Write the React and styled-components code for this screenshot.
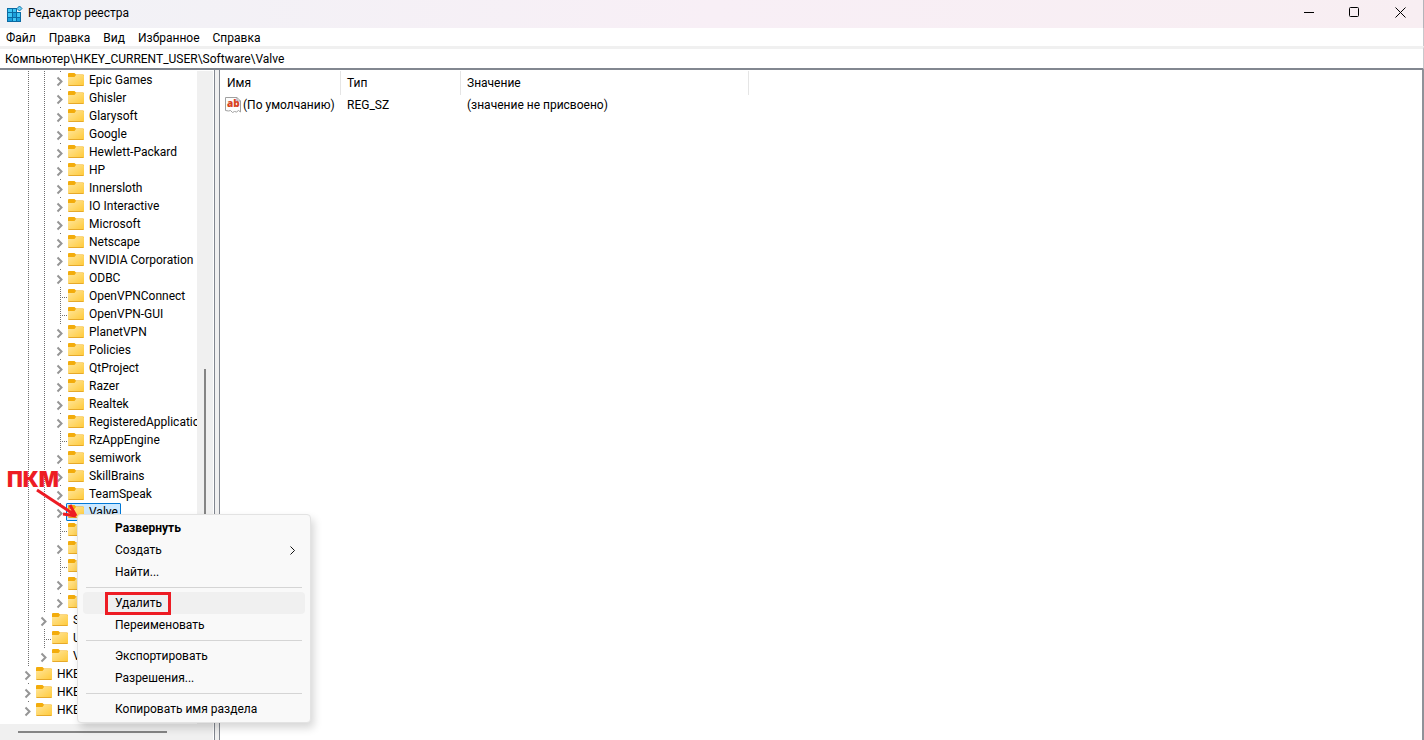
import React from 'react';
import styled, { createGlobalStyle } from 'styled-components';

const GlobalStyle = createGlobalStyle`
  * {
    box-sizing: border-box;
  }

  body {
    margin: 0;
    background: #fff;
    overflow: hidden;
  }

  button,
  input {
    border: 0;
    padding: 0;
    background: none;
    color: inherit;
    font: inherit;
    outline: 0;
  }
`;

const Window = styled.div`
  display: flex;
  flex-direction: column;
  height: 100vh;
  background: #fff;
  color: #000;
  font: 12px/18px Roboto, 'Noto Sans', sans-serif;
`;

const TitleBar = styled.header`
  display: flex;
  align-items: center;
  height: 28px;
  padding-left: 6px;
  border-right: 1px solid #b4b4ba;
  background: linear-gradient(90deg, #f1f2f6, #f8eff6 50%, #f8eef2);
`;

const Title = styled.h1`
  flex: 1;
  margin: 0 0 0 5px;
  padding-bottom: 2px;
  font-size: 12px;
  font-weight: 400;
`;

const WindowButton = styled.button`
  display: flex;
  align-items: center;
  justify-content: center;
  width: 46px;
  height: 28px;
  padding-bottom: 4px;
`;

const MenuBar = styled.nav`
  display: flex;
  gap: 13px;
  height: 18px;
  padding-left: 6px;
  border-right: 1px solid #c8c8cc;
`;

const MenuBarItem = styled.button`
  line-height: 20px;
`;

const Address = styled.input`
  flex: none;
  height: 24px;
  padding: 0 5px;
  border-top: 3px solid #f0f0f0;
  border-right: 1px solid #c8c8cc;
  border-bottom: 2px solid #828790;
`;

const Main = styled.main`
  display: flex;
  flex: 1;
  min-height: 0;
  border-right: 2px solid #8f9299;
`;

const Sidebar = styled.aside`
  position: relative;
  display: flex;
  flex-direction: column;
  width: 215px;
  border-right: 1px solid #828790;
  padding: 1px 1px 0 0;
`;

const TreeArea = styled.div`
  display: flex;
  flex: 1;
  min-height: 0;
`;

const Tree = styled.ul`
  flex: 1;
  min-width: 0;
  margin: 0;
  padding: 0 0 0 20px;
  overflow: hidden;
  list-style: none;
`;

const TreeRow = styled.li`
  display: flex;
  height: 18px;
`;

const dots = 'repeating-linear-gradient(180deg, #707070 0 1px, transparent 1px 2px)';
const rowDots = 'repeating-linear-gradient(90deg, #707070 0 1px, transparent 1px 2px)';

const Guide = styled.span`
  flex: none;
  width: 16px;
  background: ${dots} 8px 0 / 1px 100% no-repeat;
`;

const Branch = styled(Guide)`
  background: ${dots} 8px 0 / 1px 100% no-repeat,
    ${rowDots} 8px 10px / 8px 1px no-repeat;
`;

const Expander = styled.button`
  flex: none;
  width: 16px;
  height: 18px;
  background: linear-gradient(#707070, #707070) 8px 0 / 1px 1px no-repeat;

  svg {
    display: block;
    margin: 2px 0 0 4px;
  }
`;

const Key = styled.button`
  display: flex;
  flex: none;
  margin-left: -2px;
  padding: 0 2px 0 1px;
  border: 1px solid ${props => (props.$selected ? '#0078d7' : 'transparent')};
  border-radius: 1px;
  background: ${props => (props.$selected ? '#cce8ff' : 'none')};
  line-height: 16px;
  white-space: nowrap;

  svg {
    flex: none;
    margin: 0 5px 0 0;
  }
`;

const VerticalBar = styled.div`
  display: flex;
  flex-direction: column;
  align-items: center;
  width: 16px;
  background: #f0f0f0;

  &::before {
    content: '';
    flex: 298;
  }

  &::after {
    content: '';
    flex: 25;
  }
`;

const VerticalThumb = styled.div`
  flex: 330;
  width: 2px;
  background: #858585;
`;

const HorizontalBar = styled.div`
  display: flex;
  align-items: center;
  height: 16px;
  padding: 0 46px 0 18px;
  background: #f0f0f0;
`;

const HorizontalThumb = styled.div`
  flex: 1;
  height: 2px;
  background: #858585;
`;

const Splitter = styled.div`
  width: 5px;
  border-right: 1px solid #828790;
  background: #f0f0f0;
`;

const Values = styled.section`
  flex: 1;
  padding-top: 1px;
`;

const Table = styled.table`
  table-layout: fixed;
  width: 529px;
  border-collapse: separate;
  border-spacing: 0;
`;

const Th = styled.th`
  width: ${props => props.$width}px;
  height: 24px;
  padding: 0 0 0 ${props => (props.$first ? 7 : 6)}px;
  border-right: 1px solid #e5e5e5;
  font-weight: 400;
  text-align: left;
`;

const Td = styled.td`
  height: 20px;
  padding: 0 0 0 ${props => (props.$icon ? 5 : 6)}px;
  white-space: nowrap;
`;

const ValueName = styled.span`
  display: flex;
  align-items: center;
  gap: 2px;
`;

const ContextMenu = styled.div`
  position: absolute;
  top: 444px;
  left: 77px;
  z-index: 1;
  width: 234px;
  padding: 2px 5px;
  border: 1px solid #e3e3e3;
  border-radius: 4px;
  background: #f9f9f9;
  box-shadow: 3px 5px 9px rgba(0, 0, 0, 0.16);
`;

const ContextItem = styled.button`
  position: relative;
  display: flex;
  align-items: center;
  justify-content: space-between;
  width: 100%;
  height: 22px;
  padding: 0 8px 0 32px;
  border-radius: 4px;
  background: ${props => (props.$active ? '#f0f0f0' : 'none')};
  font-weight: ${props => (props.$bold ? 700 : 400)};
  text-align: left;
`;

const Separator = styled.hr`
  height: 1px;
  margin: 4px 3px;
  border: 0;
  background: #d5d5d5;
`;

const Highlight = styled.span`
  position: absolute;
  top: 0;
  left: 22px;
  width: 66px;
  height: 23px;
  border: 3px solid #ed1c24;
`;

const Note = styled.div`
  position: absolute;
  top: 398px;
  left: 7px;
  z-index: 2;
  color: #ed1c24;
  font: 900 21px/24px Inter, sans-serif;
`;

const Arrow = styled.svg`
  position: absolute;
  top: 416px;
  left: 32px;
  z-index: 2;
`;

const AppIcon = () => (
  <svg width="17" height="18" viewBox="0 0 17 18">
    <path d="M1 3h10v4h4v10H1z" fill="#0b6aa3" />
    <path d="M2 4h4v3H2zM7 4h3v3H7zM2 8h4v4H2zM11 8h3v4h-3zM7 13h3v3H7z" fill="#3fc6f3" />
    <path d="M7 8h3v4H7zM2 13h4v3H2zM11 13h3v3h-3z" fill="#1c9fdc" />
    <path d="M13.500 1L16 3.500 13.500 6 11 3.500z" fill="#6bd4f7" stroke="#1273ab" />
  </svg>
);

const FolderIcon = () => (
  <svg width="16" height="14" viewBox="0 0 16 14">
    <defs>
      <linearGradient id="folder" x1="0" y1="0" x2="1" y2="1">
        <stop offset="0" stopColor="#ffe69c" />
        <stop offset="1" stopColor="#ffc937" />
      </linearGradient>
    </defs>
    <path d="M0 2q0-1 1-1h5.500L8 2.500h7q1 0 1 1V6H0z" fill="#f3ac0b" />
    <path d="M0 5h6.500L8 3h7q1 0 1 1v9q0 1-1 1H1q-1 0-1-1z" fill="url(#folder)" />
    <path d="M.5 13.500h15" stroke="#e6a92a" />
  </svg>
);

const StringIcon = () => (
  <svg width="16" height="16" viewBox="0 0 16 16">
    <path
      d="M.5.500h11.500l3.500 3.500v11l-2-1.500-2 1.500-2-.5-2 1-2-2-2 .5-3-.500z"
      fill="#fdfdfd"
      stroke="#a0a0a0"
    />
    <path d="M12 .500V4h3.500" fill="none" stroke="#a0a0a0" />
    <text x="2" y="10" fill="#d8431f" fontFamily="Open Sans" fontSize="10" fontWeight="800">
      ab
    </text>
  </svg>
);

const Chevron = ({ color, weight }) => (
  <svg width="8" height="13" viewBox="0 0 8 13">
    <path d="M1.500 2.500l4 4-4 4" fill="none" stroke={color} strokeWidth={weight} />
  </svg>
);

const keys = [
  ['Epic Games', 3, true],
  ['Ghisler', 3, true],
  ['Glarysoft', 3, true],
  ['Google', 3, true],
  ['Hewlett-Packard', 3, true],
  ['HP', 3, true],
  ['Innersloth', 3, true],
  ['IO Interactive', 3, true],
  ['Microsoft', 3, true],
  ['Netscape', 3, true],
  ['NVIDIA Corporation', 3, true],
  ['ODBC', 3, true],
  ['OpenVPNConnect', 3, false],
  ['OpenVPN-GUI', 3, false],
  ['PlanetVPN', 3, true],
  ['Policies', 3, true],
  ['QtProject', 3, true],
  ['Razer', 3, true],
  ['Realtek', 3, true],
  ['RegisteredApplications', 3, true],
  ['RzAppEngine', 3, false],
  ['semiwork', 3, true],
  ['SkillBrains', 3, true],
  ['TeamSpeak', 3, true],
  ['Valve', 3, true],
  ['', 3, false],
  ['', 3, true],
  ['', 3, false],
  ['', 3, true],
  ['', 3, true],
  ['S', 2, true],
  ['U', 2, false],
  ['V', 2, true],
  ['HKE', 1, true],
  ['HKE', 1, true],
  ['HKE', 1, true],
];

const App = () => (
  <>
    <GlobalStyle />
    <Window>
      <TitleBar>
        <AppIcon />
        <Title>Редактор реестра</Title>
        <WindowButton aria-label="Свернуть">
          <svg width="11" height="11" stroke="#000">
            <path d="M1 5.500h10" />
          </svg>
        </WindowButton>
        <WindowButton aria-label="Развернуть">
          <svg width="11" height="11" stroke="#000" fill="none">
            <rect x=".5" y=".5" width="9" height="9" rx="1" />
          </svg>
        </WindowButton>
        <WindowButton aria-label="Закрыть">
          <svg width="11" height="11" stroke="#000">
            <path d="M.5.500l10 10M10.500.500l-10 10" />
          </svg>
        </WindowButton>
      </TitleBar>
      <MenuBar>
        {['Файл', 'Правка', 'Вид', 'Избранное', 'Справка'].map(item => (
          <MenuBarItem key={item}>{item}</MenuBarItem>
        ))}
      </MenuBar>
      <Address
        aria-label="Адрес"
        defaultValue="Компьютер\HKEY_CURRENT_USER\Software\Valve"
      />
      <Main>
        <Sidebar>
          <TreeArea>
            <Tree>
              {keys.map(([name, level, expandable], i) => (
                <TreeRow key={i}>
                  {level > 1 && <Guide />}
                  {level > 2 && <Guide />}
                  {expandable ? (
                    <Expander aria-label="Раскрыть">
                      <Chevron color="#959595" weight={2} />
                    </Expander>
                  ) : (
                    <Branch />
                  )}
                  <Key $selected={name === 'Valve'}>
                    <FolderIcon />
                    {name}
                  </Key>
                </TreeRow>
              ))}
            </Tree>
            <VerticalBar>
              <VerticalThumb />
            </VerticalBar>
          </TreeArea>
          <HorizontalBar>
            <HorizontalThumb />
          </HorizontalBar>
          <ContextMenu>
            <ContextItem $bold>Развернуть</ContextItem>
            <ContextItem>
              Создать
              <Chevron color="#111" weight={1} />
            </ContextItem>
            <ContextItem>Найти...</ContextItem>
            <Separator />
            <ContextItem $active>
              Удалить
              <Highlight />
            </ContextItem>
            <ContextItem>Переименовать</ContextItem>
            <Separator />
            <ContextItem>Экспортировать</ContextItem>
            <ContextItem>Разрешения...</ContextItem>
            <Separator />
            <ContextItem>Копировать имя раздела</ContextItem>
          </ContextMenu>
          <Note>ПКМ</Note>
          <Arrow width="50" height="34" fill="none" stroke="#ed1c24" strokeWidth="3">
            <path d="M5 4l38 25M38 19l6 11M31 28l13 2" />
          </Arrow>
        </Sidebar>
        <Splitter />
        <Values>
          <Table>
            <thead>
              <tr>
                <Th $width={121} $first>
                  Имя
                </Th>
                <Th $width={120}>Тип</Th>
                <Th $width={288}>Значение</Th>
              </tr>
            </thead>
            <tbody>
              <tr>
                <Td $icon>
                  <ValueName>
                    <StringIcon />
                    (По умолчанию)
                  </ValueName>
                </Td>
                <Td>REG_SZ</Td>
                <Td>(значение не присвоено)</Td>
              </tr>
            </tbody>
          </Table>
        </Values>
      </Main>
    </Window>
  </>
);

export default App;
